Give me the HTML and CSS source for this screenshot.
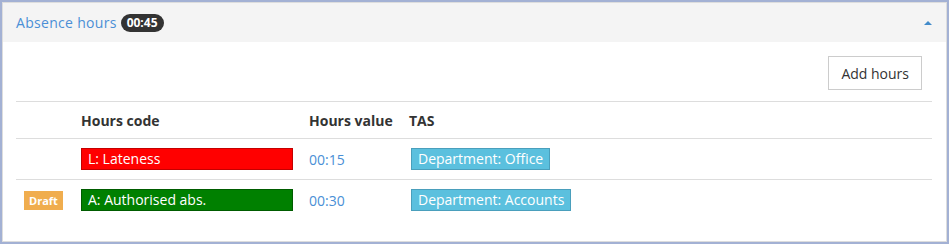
FILE: index.html
```html
<!DOCTYPE html>
<html lang="en">
<head>
    <meta charset="UTF-8">
    <title>Absence hours</title>
    <link rel="stylesheet" href="styles.css">
</head>
<body>
    <div class="panel">
        <div class="panel-heading">
            <span class="panel-title">Absence hours</span>
            <span class="badge">00:45</span>
            <span class="caret-up"></span>
        </div>
        <div class="panel-body">
            <div class="toolbar">
                <button class="btn">Add hours</button>
            </div>
            <table class="hours-table">
                <thead>
                    <tr>
                        <th class="col-state"></th>
                        <th class="col-code">Hours code</th>
                        <th class="col-value">Hours value</th>
                        <th>TAS</th>
                    </tr>
                </thead>
                <tbody>
                    <tr>
                        <td></td>
                        <td><span class="code code-red">L: Lateness</span></td>
                        <td><a class="value">00:15</a></td>
                        <td><span class="tas">Department: Office</span></td>
                    </tr>
                    <tr>
                        <td><span class="draft">Draft</span></td>
                        <td><span class="code code-green">A: Authorised abs.</span></td>
                        <td><a class="value">00:30</a></td>
                        <td><span class="tas">Department: Accounts</span></td>
                    </tr>
                </tbody>
            </table>
        </div>
    </div>
</body>
</html>
```

FILE: styles.css
```css
html, body {
    height: 100%;
}
body {
    margin: 0;
    padding: 2px 2px 2px 2px;
    box-sizing: border-box;
    background-color: #a3b1d4;
    font-family: "Open Sans", Arial, sans-serif;
    font-size: 14px;
    color: #333;
}
.panel {
    height: 100%;
    box-sizing: border-box;
    background-color: #fff;
    border: 1px solid #ddd;
}
.panel-heading {
    display: flex;
    align-items: center;
    height: 39px;
    padding: 0 14px 0 13px;
    background-color: #f4f4f4;
}
.panel-title {
    color: #4a8fd6;
    letter-spacing: 0.3px;
}
.badge {
    margin-left: 4px;
    padding: 1px 6px;
    border-radius: 9px;
    background-color: #333;
    color: #fff;
    font-size: 12px;
    font-weight: bold;
    line-height: 16px;
}
.caret-up {
    margin-left: auto;
    width: 0;
    height: 0;
    border-left: 4px solid transparent;
    border-right: 4px solid transparent;
    border-bottom: 4px solid #428bca;
}
.panel-body {
    padding: 14px 14px 0 13px;
}
.toolbar {
    display: flex;
    justify-content: flex-end;
    padding-right: 10px;
    margin-bottom: 11px;
}
.btn {
    font-family: inherit;
    font-size: 14px;
    color: #333;
    background-color: #fff;
    border: 1px solid #ccc;
    padding: 6px 12px;
    height: 34px;
}
.hours-table {
    width: 100%;
    border-collapse: collapse;
}
.hours-table th,
.hours-table td {
    text-align: left;
    border-top: 1px solid #ddd;
    padding: 9px 8px;
    vertical-align: middle;
}
.hours-table th {
    font-weight: bold;
    padding: 8px 8px 8px 8px;
    height: 20px;
}
.col-state {
    width: 41px;
}
.col-code {
    width: 212px;
}
.col-value {
    width: 84px;
}
.code {
    display: block;
    padding: 0 6px;
    color: #fff;
    line-height: 20px;
}
.code-red {
    background-color: #ff0000;
    border: 1px solid #c40000;
}
.code-green {
    background-color: #008000;
    border: 1px solid #005c00;
}
.value {
    color: #4a8fd6;
}
.tas {
    display: inline-block;
    margin-left: 2px;
    padding: 0 6px;
    background-color: #5bc0de;
    border: 1px solid #4a9fbc;
    color: #fff;
    line-height: 20px;
}
.draft {
    display: inline-block;
    padding: 0 5px;
    background-color: #f0ad4e;
    color: #fff;
    font-size: 11px;
    font-weight: bold;
    line-height: 19px;
}
```
